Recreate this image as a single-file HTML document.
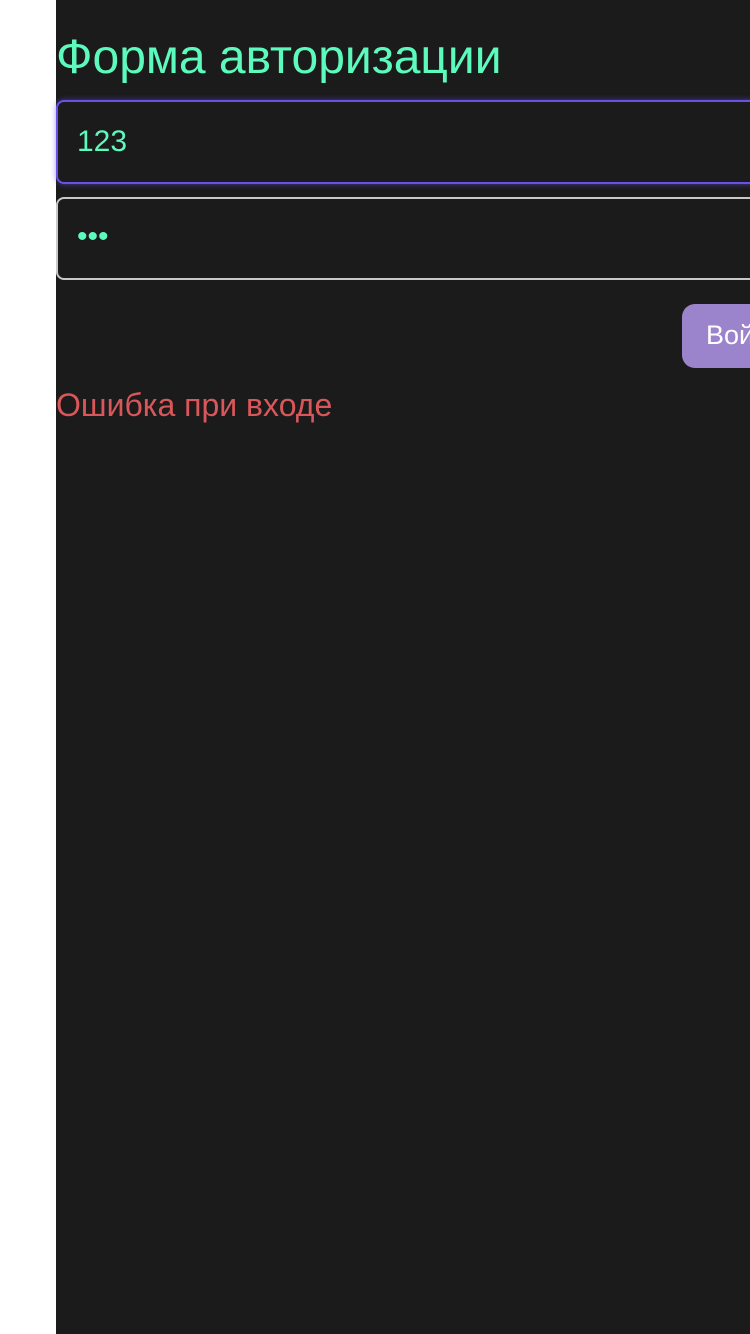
<!DOCTYPE html>
<html><head><meta charset="utf-8"><style>
html,body{margin:0;padding:0;width:750px;height:1334px;overflow:hidden;background:#fff;font-family:"Liberation Sans",sans-serif}
.panel{position:absolute;left:56px;top:0;width:800px;height:1334px;background:#1b1b1b}
h1{position:absolute;left:56px;top:28px;margin:0;font-weight:normal;font-size:48px;color:#5cfbbd;line-height:60px;white-space:nowrap}
.in{position:absolute;left:56px;width:760px;box-sizing:border-box;border-radius:8px;background:#1b1b1b;color:#5cfbbd;font-size:30px;padding-left:19px}
.i1{top:100px;height:84px;border:2px solid #6a50e8;box-shadow:0 0 6px rgba(106,80,232,.6);line-height:80px}
.i2{top:197px;height:83px;border:2px solid #c8c8c8;line-height:76px;font-size:30px}
.btn{position:absolute;left:682px;top:304px;width:120px;height:64px;border-radius:13px;background:#9b84cc;color:#fff;font-size:27px;line-height:62px;padding-left:24px;white-space:nowrap}
.err{position:absolute;left:56px;top:387px;font-size:32px;color:#d9575a;white-space:nowrap}
</style></head><body>
<div class="panel"></div>
<h1>Форма авторизации</h1>
<div class="in i1">123</div>
<div class="in i2">•••</div>
<div class="btn">Войти</div>
<div class="err">Ошибка при входе</div>
</body></html>
